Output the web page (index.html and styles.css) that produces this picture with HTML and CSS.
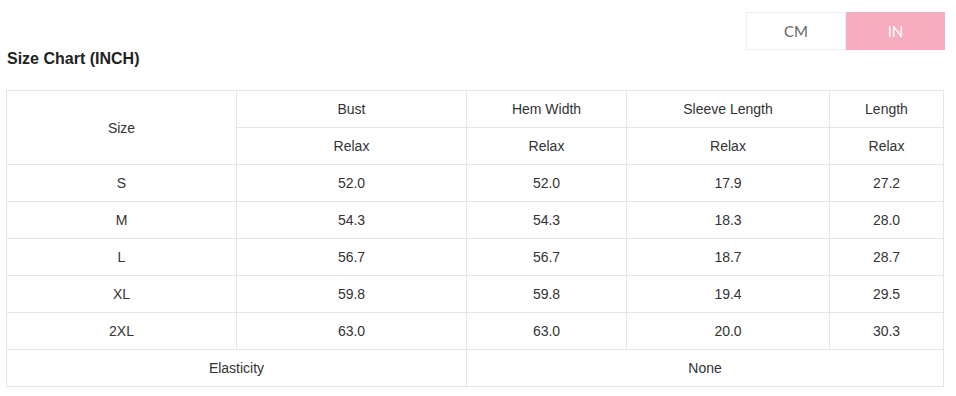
FILE: index.html
```html
<!DOCTYPE html>
<html lang="en">
<head>
    <meta charset="UTF-8">
    <meta name="viewport" content="width=device-width, initial-scale=1.0">
    <title>Size Chart</title>
    <link rel="stylesheet" href="styles.css">
</head>
<body>
    <div class="size-chart">
        <div class="unit-switch">
            <button class="unit">CM</button>
            <button class="unit active">IN</button>
        </div>
        <h3 class="chart-title">Size Chart (INCH)</h3>

        <table class="chart-table">
            <colgroup>
                <col style="width: 230px">
                <col style="width: 230px">
                <col style="width: 160px">
                <col style="width: 203px">
                <col>
            </colgroup>
            <tr>
                <td rowspan="2">Size</td>
                <td>Bust</td>
                <td>Hem Width</td>
                <td>Sleeve Length</td>
                <td>Length</td>
            </tr>
            <tr>
                <td>Relax</td>
                <td>Relax</td>
                <td>Relax</td>
                <td>Relax</td>
            </tr>
            <tr><td>S</td><td>52.0</td><td>52.0</td><td>17.9</td><td>27.2</td></tr>
            <tr><td>M</td><td>54.3</td><td>54.3</td><td>18.3</td><td>28.0</td></tr>
            <tr><td>L</td><td>56.7</td><td>56.7</td><td>18.7</td><td>28.7</td></tr>
            <tr><td>XL</td><td>59.8</td><td>59.8</td><td>19.4</td><td>29.5</td></tr>
            <tr><td>2XL</td><td>63.0</td><td>63.0</td><td>20.0</td><td>30.3</td></tr>
            <tr>
                <td colspan="2">Elasticity</td>
                <td colspan="3">None</td>
            </tr>
        </table>
    </div>
</body>
</html>
```

FILE: styles.css
```css
* {
    box-sizing: border-box;
    margin: 0;
    padding: 0;
}

body {
    background-color: #fff;
    font-family: Arial, "Liberation Sans", sans-serif;
    color: #333;
}

.size-chart {
    width: 938px;
    margin: 12px 0 0 6px;
}

.unit-switch {
    display: flex;
    justify-content: flex-end;
}

.unit {
    width: 100px;
    height: 38px;
    border: 1px solid #eee;
    background-color: #fff;
    color: #666;
    font-family: Lato, sans-serif;
    font-size: 15px;
    cursor: pointer;
}

.unit.active {
    width: 99px;
    margin-right: -1px;
    background-color: #f7adc0;
    border-color: #f7adc0;
    color: #fff;
}

.chart-title {
    margin: 0 0 0 1px;
    font-size: 16px;
    font-weight: bold;
    line-height: 18px;
    color: #222;
}

.chart-table {
    width: 938px;
    margin-top: 22px;
    border-collapse: collapse;
    table-layout: fixed;
}

.chart-table td {
    height: 37px;
    border: 1px solid #e5e5e5;
    text-align: center;
    font-size: 14px;
    color: #333;
}
```
